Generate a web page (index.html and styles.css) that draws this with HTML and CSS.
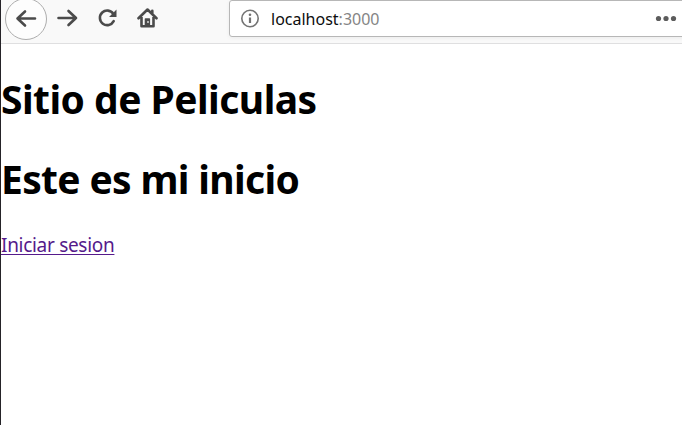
FILE: index.html
```html
<!DOCTYPE html>
<html lang="es">
<head>
<meta charset="utf-8">
<title>Sitio de Peliculas</title>
<link rel="stylesheet" href="styles.css">
</head>
<body>
<div class="window">
  <header class="toolbar">
    <button class="back" aria-label="Atrás"><svg width="22" height="22" viewBox="0 0 22 22"><path d="M20 10.500H2.500M10 3.500l-7.500 7 7.500 7"/></svg></button>
    <button class="tool" aria-label="Adelante"><svg width="22" height="22" viewBox="0 0 22 22"><path d="M2.500 11H20M12.500 4l7.500 7-7.500 7"/></svg></button>
    <button class="tool" aria-label="Recargar"><svg width="22" height="22" viewBox="0 0 22 22"><path d="M17.700 14.200A7.300 7.300 0 1 1 17.300 6.800"/><path class="solid" d="M20.500 2.500v7.500h-7.500l3-3 1.800-.3.200-1.700z"/></svg></button>
    <button class="tool" aria-label="Inicio"><svg width="22" height="22" viewBox="0 0 22 22"><path d="M2.500 11.300l9-8.800 9 8.800M5.500 10v9.200h12V10M16.300 3.800v3"/><path class="solid" fill-rule="evenodd" d="M8.700 19v-7q0-.8.800-.8h3.800q.8 0 .8.800v7zM11.400 14v2h1.200v-2z"/></svg></button>
    <div class="address">
      <svg class="info" width="20" height="20" viewBox="0 0 20 20"><circle cx="10" cy="9.500" r="8.200"/><path d="M10 8.500v5.500"/><circle class="dot" cx="10" cy="5.700" r="1.300"/></svg>
      <span class="url">localhost<span class="port">:3000</span></span>
      <svg class="more" width="22" height="8" viewBox="0 0 22 8"><circle cx="3.500" cy="3.500" r="2.600"/><circle cx="11" cy="3.500" r="2.600"/><circle cx="18.500" cy="3.500" r="2.600"/></svg>
    </div>
  </header>
  <main>
    <h1><span class="site">Sitio de Peliculas</span></h1>
    <h1><span class="home">Este es mi inicio</span></h1>
    <a href="#">Iniciar sesion</a>
  </main>
</div>
</body>
</html>
```
FILE: styles.css
```css
* { box-sizing: border-box; }
body { margin: 0; background: #fff; font-family: "Noto Sans", "Open Sans", sans-serif; overflow: hidden; }
.window { height: 425px; border-left: 1px solid #252328; }
.toolbar { display: flex; align-items: flex-start; height: 44px; padding-left: 4px; background: #f9f9f9; border-bottom: 1px solid #dfdfe0; overflow: hidden; }
button { display: flex; align-items: center; justify-content: center; flex: none; border: 0; padding: 0; background: none; }
button svg { fill: none; stroke: #4b4b4b; stroke-width: 2.6; stroke-linecap: round; stroke-linejoin: round; }
button .solid { fill: #4b4b4b; stroke: none; }
.back { width: 42px; height: 42px; margin-top: -2px; border: 1px solid #adadad; border-radius: 50%; background: #fdfdfd; }
.tool { width: 40px; height: 36px; }
.address { display: flex; align-items: center; width: 470px; height: 37px; margin-left: 62px; flex: none; background: #fff; border: 1px solid #b7b7b7; border-radius: 3px; box-shadow: 0 1px 4px rgba(0,0,0,.06); }
.info { margin-left: 10px; fill: none; stroke: #737373; stroke-width: 1.6; }
.info path { stroke-width: 2.2; }
.info .dot { fill: #737373; stroke: none; }
.url { width: 384px; margin-left: 11px; padding-top: 1px; font-size: 16px; line-height: 24px; color: #0c0c0d; }
.port { color: #858585; }
.more { fill: #5c5c5c; }
main { padding-top: 28px; }
h1 { margin: 0 0 26px; font-size: 39px; line-height: 54px; font-weight: 700; color: #000; white-space: nowrap; }
.site { letter-spacing: -0.53px; }
.home { letter-spacing: -0.66px; }
a { display: block; width: max-content; font-size: 19px; line-height: 26px; letter-spacing: -0.3px; color: #551a8b; text-decoration: underline; text-decoration-thickness: 1px; text-underline-offset: 2px; }
```
